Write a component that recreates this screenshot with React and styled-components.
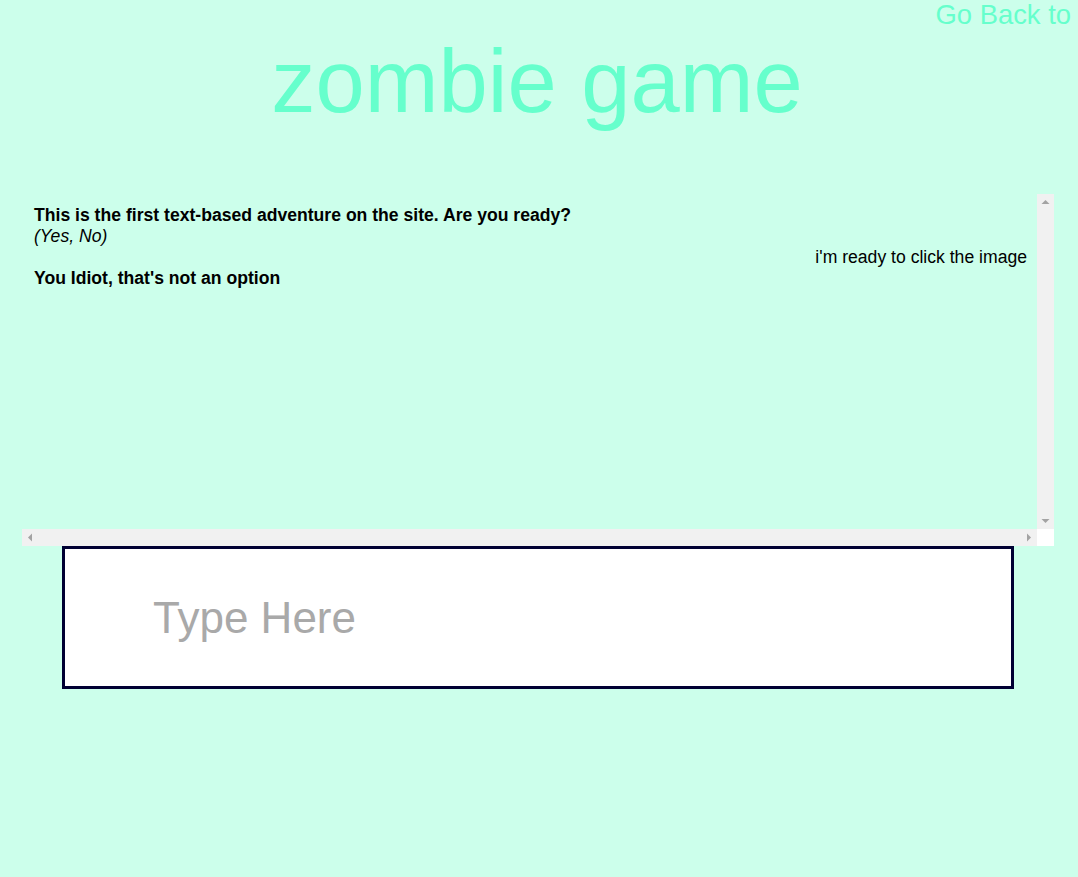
import React from "react";
import styled, { createGlobalStyle } from "styled-components";

const GlobalStyle = createGlobalStyle`
  html, body {
    margin: 0;
    padding: 0;
    background: #ccffeb;
    font-family: "Liberation Sans", Arial, sans-serif;
  }
`;

const Page = styled.div`
  padding: 0 8px;
  min-height: 877px;
  box-sizing: border-box;
`;

const Header = styled.header`
  display: flex;
  justify-content: flex-end;
  height: 30px;
  margin-right: -1px;
`;

const BackLink = styled.a`
  font-size: 27.4px;
  line-height: 30px;
  color: #66ffcc;
  text-decoration: none;
`;

const Title = styled.h1`
  margin: 1px 0 62px;
  padding-right: 4px;
  font-size: 88.5px;
  font-weight: normal;
  line-height: 101px;
  text-align: center;
  color: #66ffcc;
`;

const LogFrame = styled.div`
  display: grid;
  grid-template-columns: 1fr 17px;
  grid-template-rows: 1fr 17px;
  width: 1032px;
  height: 352px;
  margin-left: 14px;
`;

const LogContent = styled.div`
  overflow: hidden;
  padding: 11px 10px 0 12px;
  font-size: 17.6px;
  line-height: 20.9px;
  color: #000;
`;

const ScrollTrack = styled.div`
  display: flex;
  flex-direction: ${(p) => (p.$horizontal ? "row" : "column")};
  justify-content: space-between;
  background: #f1f1f1;
`;

const ScrollButton = styled.div`
  width: 17px;
  height: 17px;
  display: flex;
  align-items: center;
  justify-content: center;
`;

const Corner = styled.div`
  background: #ffffff;
`;

const Line = styled.div`
  font-weight: ${(p) => (p.$bold ? "bold" : "normal")};
  font-style: ${(p) => (p.$italic ? "italic" : "normal")};
  text-align: ${(p) => (p.$right ? "right" : "left")};
`;

const Entry = styled.input`
  display: block;
  box-sizing: border-box;
  width: 952px;
  height: 143px;
  margin: 0 0 0 54px;
  border: 3px solid #000033;
  background: #ffffff;
  padding: 0 0 0 88px;
  font-family: "Liberation Sans", Arial, sans-serif;
  font-size: 44px;
  color: #000;
  outline: none;

  &::placeholder {
    color: #a9a9a9;
    opacity: 1;
  }
`;

const arrows = {
  up: "4.5,6 8.5,10 0.5,10",
  down: "0.5,7 8.5,7 4.5,11",
  left: "2,8.5 6,4.5 6,12.5",
  right: "3,4.5 7,8.5 3,12.5",
};

function Arrow({ dir }) {
  return (
    <ScrollButton>
      <svg width={9} height={17} viewBox="0 0 9 17" style={{ display: "block" }}>
        <polygon points={arrows[dir]} fill="#a3a3a3" />
      </svg>
    </ScrollButton>
  );
}

export default function App() {
  return (
    <>
      <GlobalStyle />
      <Page>
        <Header>
          <BackLink href="#">Go Back to</BackLink>
        </Header>
        <Title>zombie game</Title>
        <LogFrame>
          <LogContent>
            <Line $bold>This is the first text-based adventure on the site. Are you ready?</Line>
            <Line $italic>(Yes, No)</Line>
            <Line $right>i'm ready to click the image</Line>
            <Line $bold>You Idiot, that's not an option</Line>
          </LogContent>
          <ScrollTrack>
            <Arrow dir="up" />
            <Arrow dir="down" />
          </ScrollTrack>
          <ScrollTrack $horizontal>
            <Arrow dir="left" />
            <Arrow dir="right" />
          </ScrollTrack>
          <Corner />
        </LogFrame>
        <Entry type="text" placeholder="Type Here" />
      </Page>
    </>
  );
}
